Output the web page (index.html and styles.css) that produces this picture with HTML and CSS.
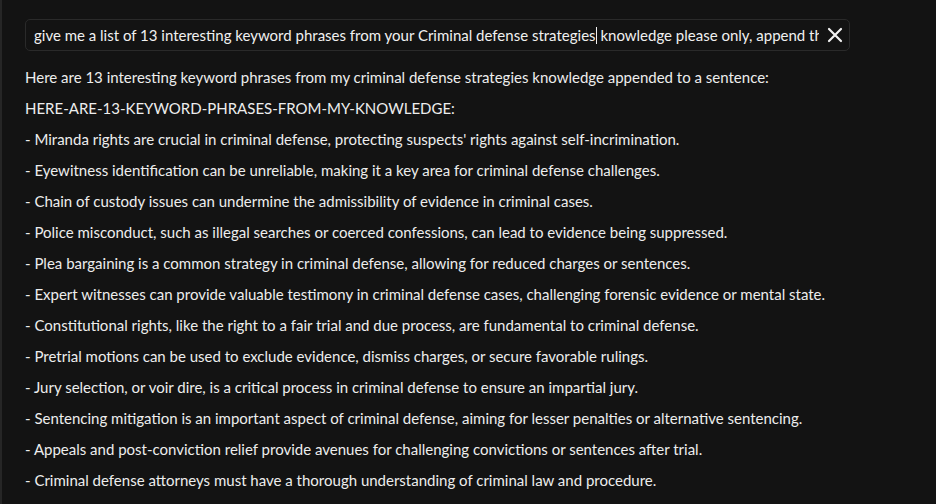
FILE: index.html
```html
<!DOCTYPE html>
<html>
<head>
<meta charset="utf-8">
<link rel="stylesheet" href="styles.css">
</head>
<body>
<div class="panel">
  <h2 class="title">Testing output</h2>
  <div class="prompt">
    <div class="prompt-text">give me a list of 13 interesting keyword phrases from your Criminal defense strategies<span class="caret"></span> knowledge please only, append the list to a sentence</div>
    <button class="close" aria-label="Clear">
      <svg width="16" height="16" viewBox="0 0 16 16"><path d="M2 2 L14 14 M14 2 L2 14" stroke="#f2f2f2" stroke-width="2.2" stroke-linecap="round" fill="none"/></svg>
    </button>
  </div>
  <div class="answer">
    <div class="line">Here are 13 interesting keyword phrases from my criminal defense strategies knowledge appended to a sentence:</div>
    <div class="line">HERE-ARE-13-KEYWORD-PHRASES-FROM-MY-KNOWLEDGE:</div>
    <div class="line">- Miranda rights are crucial in criminal defense, protecting suspects' rights against self-incrimination.</div>
    <div class="line">- Eyewitness identification can be unreliable, making it a key area for criminal defense challenges.</div>
    <div class="line">- Chain of custody issues can undermine the admissibility of evidence in criminal cases.</div>
    <div class="line">- Police misconduct, such as illegal searches or coerced confessions, can lead to evidence being suppressed.</div>
    <div class="line">- Plea bargaining is a common strategy in criminal defense, allowing for reduced charges or sentences.</div>
    <div class="line">- Expert witnesses can provide valuable testimony in criminal defense cases, challenging forensic evidence or mental state.</div>
    <div class="line">- Constitutional rights, like the right to a fair trial and due process, are fundamental to criminal defense.</div>
    <div class="line">- Pretrial motions can be used to exclude evidence, dismiss charges, or secure favorable rulings.</div>
    <div class="line">- Jury selection, or voir dire, is a critical process in criminal defense to ensure an impartial jury.</div>
    <div class="line">- Sentencing mitigation is an important aspect of criminal defense, aiming for lesser penalties or alternative sentencing.</div>
    <div class="line">- Appeals and post-conviction relief provide avenues for challenging convictions or sentences after trial.</div>
    <div class="line">- Criminal defense attorneys must have a thorough understanding of criminal law and procedure.</div>
  </div>
</div>
</body>
</html>
```
FILE: styles.css
```css
html, body {
  margin: 0;
  padding: 0;
  background: #131313;
  height: 100%;
  overflow: hidden;
}
.panel {
  height: 504px;
  border-left: 2px solid #262626;
  padding: 0 0 0 23px;
  font-family: Lato, "Liberation Sans", Arial, sans-serif;
  color: #ededed;
  overflow: hidden;
}
.title {
  margin: -26px 0 0 0;
  height: 26px;
  font-size: 24px;
  line-height: 30px;
  font-weight: 700;
  color: #f2f2f2;
  overflow: hidden;
}
.prompt {
  margin-top: 19px;
  width: 825px;
  height: 32px;
  box-sizing: border-box;
  border: 1px solid #2a2a2a;
  border-radius: 5px;
  display: flex;
  align-items: center;
  padding: 0 6px 0 8px;
}
.prompt-text {
  flex: 1;
  white-space: nowrap;
  overflow: hidden;
  font-size: 15px;
  color: #f0f0f0;
  margin-right: 8px;
}
.caret {
  display: inline-block;
  width: 1px;
  height: 17px;
  background: #f0f0f0;
  vertical-align: -3px;
}
.close {
  background: none;
  border: 0;
  padding: 0;
  width: 16px;
  height: 16px;
  display: flex;
}
.answer {
  margin-top: 11px;
}
.line {
  font-size: 15px;
  line-height: 31px;
  white-space: nowrap;
}
```
